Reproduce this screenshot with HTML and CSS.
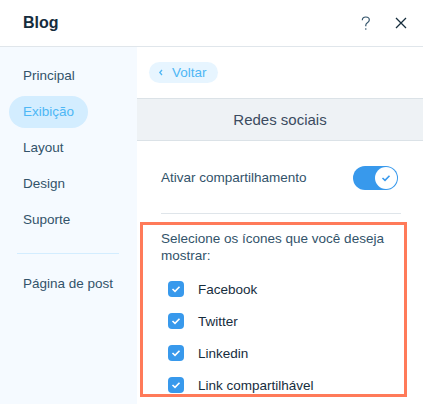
FILE: index.html
```html
<!DOCTYPE html>
<html lang="pt">
<head>
    <meta charset="UTF-8">
    <meta name="viewport" content="width=device-width, initial-scale=1.0">
    <title>Blog</title>
    <link rel="stylesheet" href="styles.css">
</head>
<body>
    <div class="panel">
        <header class="panel-header">
            <h1>Blog</h1>
            <div class="header-actions">
                <svg class="icon-help" width="10" height="15" viewBox="0 0 10 15">
                    <path d="M1.3 4.2 C1.3 2.3 2.8 1 4.8 1 C6.8 1 8.3 2.3 8.3 4 C8.3 5.6 7.2 6.3 6.1 7 C5.2 7.6 4.8 8.1 4.8 9.2 L4.8 10.2" fill="none" stroke="#32536a" stroke-width="1.2"/>
                    <circle cx="4.8" cy="13" r="0.8" fill="#32536a"/>
                </svg>
                <svg class="icon-close" width="12" height="12" viewBox="0 0 12 12">
                    <path d="M1 1 L11 11 M11 1 L1 11" stroke="#162d3d" stroke-width="1.3"/>
                </svg>
            </div>
        </header>
        <div class="panel-body">
            <nav class="sidebar">
                <a class="nav-item"><span>Principal</span></a>
                <a class="nav-item active"><span>Exibição</span></a>
                <a class="nav-item"><span>Layout</span></a>
                <a class="nav-item"><span>Design</span></a>
                <a class="nav-item"><span>Suporte</span></a>
                <div class="nav-divider"></div>
                <a class="nav-item"><span>Página de post</span></a>
            </nav>
            <main class="content">
                <div class="back-row">
                    <button class="back-btn">
                        <svg width="6" height="7" viewBox="0 0 6 7"><path d="M4 1 L1.8 3.5 L4 6" fill="none" stroke="#4eb7f5" stroke-width="1.3"/></svg>
                        Voltar
                    </button>
                </div>
                <div class="section-title">Redes sociais</div>
                <div class="setting-row">
                    <span>Ativar compartilhamento</span>
                    <div class="toggle">
                        <div class="knob">
                            <svg width="10" height="8" viewBox="0 0 10 8"><path d="M1.5 4 L4 6.3 L8.5 1.7" fill="none" stroke="#3899ec" stroke-width="1.6"/></svg>
                        </div>
                    </div>
                </div>
                <div class="highlight">
                    <p class="hint">Selecione os ícones que você deseja mostrar:</p>
                    <label class="check-row"><span class="checkbox"><svg width="10" height="8" viewBox="0 0 10 8"><path d="M1.5 4 L4 6.3 L8.5 1.7" fill="none" stroke="#fff" stroke-width="1.6"/></svg></span>Facebook</label>
                    <label class="check-row"><span class="checkbox"><svg width="10" height="8" viewBox="0 0 10 8"><path d="M1.5 4 L4 6.3 L8.5 1.7" fill="none" stroke="#fff" stroke-width="1.6"/></svg></span>Twitter</label>
                    <label class="check-row"><span class="checkbox"><svg width="10" height="8" viewBox="0 0 10 8"><path d="M1.5 4 L4 6.3 L8.5 1.7" fill="none" stroke="#fff" stroke-width="1.6"/></svg></span>Linkedin</label>
                    <label class="check-row"><span class="checkbox"><svg width="10" height="8" viewBox="0 0 10 8"><path d="M1.5 4 L4 6.3 L8.5 1.7" fill="none" stroke="#fff" stroke-width="1.6"/></svg></span>Link compartilhável</label>
                </div>
            </main>
        </div>
    </div>
</body>
</html>
```

FILE: styles.css
```css
body {
    margin: 0;
    padding: 0;
    font-family: "Liberation Sans", Arial, sans-serif;
    background-color: #fff;
    overflow: hidden;
}

.panel {
    width: 423px;
    height: 404px;
    display: flex;
    flex-direction: column;
    overflow: hidden;
}

.panel-header {
    height: 46px;
    flex-shrink: 0;
    display: flex;
    align-items: center;
    justify-content: space-between;
    padding: 0 16px 0 23px;
    border-bottom: 1px solid #e0e6eb;
}

.panel-header h1 {
    margin: 0;
    font-size: 16px;
    font-weight: bold;
    color: #162d3d;
}

.header-actions {
    display: flex;
    align-items: center;
    gap: 24px;
}

.icon-help {
    display: block;
    margin-top: 1px;
}

.icon-close {
    display: block;
}

.panel-body {
    flex: 1;
    display: flex;
    min-height: 0;
}

.sidebar {
    width: 137px;
    flex-shrink: 0;
    background-color: #f5faff;
    padding-top: 11px;
}

.nav-item {
    display: flex;
    align-items: center;
    height: 36px;
    padding-left: 9px;
    font-size: 13.5px;
    color: #32536a;
    cursor: pointer;
}

.nav-item span {
    padding: 0 14px;
    line-height: 32px;
    border-radius: 16px;
}

.nav-item.active span {
    background-color: #d3edff;
    color: #4eb7f5;
}

.nav-divider {
    height: 1px;
    background-color: #d3edff;
    margin: 15px 18px 12px 17px;
}

.content {
    flex: 1;
    min-width: 0;
}

.back-row {
    padding: 15px 0 0 12px;
}

.back-btn {
    display: flex;
    align-items: center;
    gap: 8px;
    height: 21px;
    padding: 0 11px 0 9px;
    border: none;
    border-radius: 11px;
    background-color: #e7f5ff;
    color: #4eb7f5;
    font-family: inherit;
    font-size: 13.5px;
    cursor: pointer;
}

.section-title {
    margin-top: 15px;
    height: 41px;
    line-height: 41px;
    text-align: center;
    background-color: #eef2f5;
    border-top: 1px solid #dbe2e7;
    border-bottom: 1px solid #dbe2e7;
    font-size: 15px;
    color: #3b4b5f;
}

.setting-row {
    margin: 0 22px 0 24px;
    height: 72px;
    display: flex;
    align-items: center;
    justify-content: space-between;
    border-bottom: 1px solid #dfe5ea;
    font-size: 13.5px;
    color: #32536a;
}

.toggle {
    width: 45px;
    height: 24px;
    border-radius: 12px;
    background-color: #3899ec;
    margin-right: 3px;
    margin-top: 1px;
    display: flex;
    align-items: center;
    justify-content: flex-end;
    padding-right: 1px;
    box-sizing: border-box;
}

.knob {
    width: 22px;
    height: 22px;
    border-radius: 50%;
    background-color: #fff;
    display: flex;
    align-items: center;
    justify-content: center;
}

.highlight {
    margin: 8px 16px 0 3px;
    height: 175px;
    box-sizing: border-box;
    border: 3px solid #ff7a59;
    padding: 5px 10px 0 18px;
}

.hint {
    margin: 0 0 9px 0;
    font-size: 13.5px;
    line-height: 17px;
    color: #32536a;
}

.check-row {
    display: flex;
    align-items: center;
    gap: 14px;
    height: 32px;
    padding-left: 7px;
    font-size: 13.5px;
    color: #162d3d;
}

.checkbox {
    width: 16px;
    height: 16px;
    border-radius: 4px;
    background-color: #3899ec;
    display: flex;
    align-items: center;
    justify-content: center;
}
```
